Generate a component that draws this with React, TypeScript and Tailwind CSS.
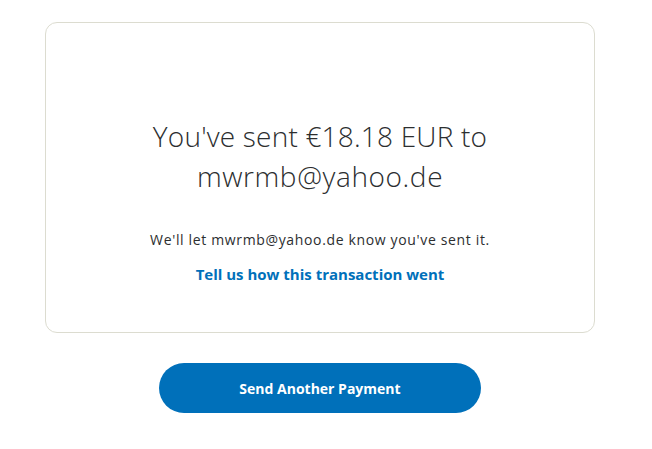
import React from "react";

export default function App() {
  return (
    <div className="min-h-[449px] w-full bg-white" style={{ fontFamily: "'Open Sans', 'Noto Sans', sans-serif" }}>
      <div className="ml-[45px] w-[550px] pt-[22px] flex flex-col items-center">
        <div className="w-full h-[311px] rounded-[12px] border border-[#dcdcd0] flex flex-col items-center pt-[93px]">
          <h1 className="text-[28px] leading-[40px] font-light text-[#2c2e2f] text-center">
            <span className="block tracking-[0.2px]">You've sent €18.18 EUR to</span>
            <span className="block tracking-[0.6px]">mwrmb@yahoo.de</span>
          </h1>
          <p className="mt-[34px] text-[14px] leading-[20px] tracking-[0.65px] text-[#2c2e2f]">
            We'll let mwrmb@yahoo.de know you've sent it.
          </p>
          <a className="mt-[14px] text-[15px] leading-[20px] font-bold text-[#0070ba]">
            Tell us how this transaction went
          </a>
        </div>
        <button className="mt-[30px] w-[322px] h-[50px] rounded-full bg-[#0070ba] text-white text-[14px] font-bold">
          Send Another Payment
        </button>
      </div>
    </div>
  );
}
